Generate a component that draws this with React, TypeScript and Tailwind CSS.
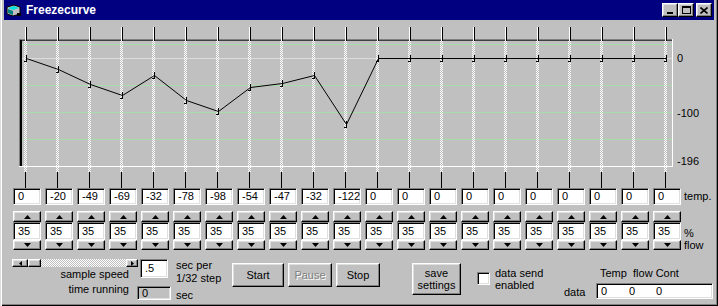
import type { ReactNode } from 'react'

const temps = [0, -20, -49, -69, -32, -78, -98, -54, -47, -32, -122, 0, 0, 0, 0, 0, 0, 0, 0, 0, 0]

const raised =
  'border border-t-white border-l-white border-r-black border-b-black shadow-[inset_-1px_-1px_0_#808080,inset_1px_1px_0_#dfdfdf] bg-[#c0c0c0]'
const sunken =
  'border border-t-[#808080] border-l-[#808080] border-r-white border-b-white shadow-[inset_1px_1px_0_#000,inset_-1px_-1px_0_#dfdfdf]'

const colX = (k: number) => 25 + 32 * k
const valY = (v: number) => 58 - v * 0.54

function Chart() {
  const pts = temps.map((v, k) => `${colX(k) + 1.5},${Math.round(valY(v)) + 0.5}`).join(' ')
  return (
    <svg width="672" height="168" viewBox="4 20 672 168" className="block shrink-0">
      <g shapeRendering="crispEdges">
        {/* sunken frame */}
        <rect x="19" y="39" width="654" height="1" fill="#808080" />
        <rect x="19" y="40" width="653" height="1" fill="#404040" />
        <rect x="19" y="39" width="1" height="128" fill="#808080" />
        <rect x="20" y="40" width="2" height="126" fill="#000" />
        <rect x="672" y="39" width="1" height="128" fill="#fff" />
        <rect x="19" y="166" width="654" height="1" fill="#fff" />
        {/* grid */}
        {[44, 85, 112, 139].map(y => (
          <rect key={y} x="22" y={y} width="650" height="1" fill="#a8dca8" />
        ))}
        <rect x="22" y="58" width="650" height="1" fill="#dcdcdc" />
        {temps.map((_, k) => (
          <g key={k}>
            <line x1={colX(k) - 0.5} y1="41" x2={colX(k) - 0.5} y2="172" stroke="#fff" strokeDasharray="1 1" />
            <line x1={colX(k) + 0.5} y1="42" x2={colX(k) + 0.5} y2="172" stroke="#fff" strokeDasharray="1 1" />
            <line x1={colX(k) + 1.5} y1="41" x2={colX(k) + 1.5} y2="172" stroke="#fff" strokeDasharray="1 1" />
            <rect x={colX(k)} y="27" width="1" height="14" fill="#fff" />
            <rect x={colX(k) + 1} y="27" width="1" height="14" fill="#000" />
            <rect x={colX(k)} y="172" width="1" height="16" fill="#000" />
          </g>
        ))}
      </g>
      {/* curve */}
      <polyline points={pts} fill="none" stroke="#000" strokeWidth="1" />
      <g shapeRendering="crispEdges">
        {temps.map((v, k) => {
          const x = colX(k) + 1.5
          const y = Math.round(valY(v)) + 0.5
          return <path key={k} d={`M${x - 3} ${y + 3} H${x} V${y - 4}`} fill="none" stroke="#000" strokeWidth="1" />
        })}
      </g>
    </svg>
  )
}

function Arrow({ dir }: { dir: 'up' | 'down' | 'left' | 'right' }) {
  if (dir === 'up') return <svg width="7" height="4"><polygon points="3.5,0 7,4 0,4" fill="#000" /></svg>
  if (dir === 'down') return <svg width="7" height="4"><polygon points="0,0 7,0 3.5,4" fill="#000" /></svg>
  if (dir === 'left') return <svg width="3" height="5"><polygon points="3,0 3,5 0,2.5" fill="#000" /></svg>
  return <svg width="3" height="5"><polygon points="0,0 3,2.5 0,5" fill="#000" /></svg>
}

function TitleButton({ children, className = '' }: { children: ReactNode; className?: string }) {
  return <div className={`flex h-[14px] w-[16px] items-center justify-center ${raised} ${className}`}>{children}</div>
}

function Button({ children, className = '' }: { children?: ReactNode; className?: string }) {
  return <div className={`flex items-center justify-center text-center ${raised} ${className}`}>{children}</div>
}

export default function App() {
  return (
    <div className="h-[306px] w-[718px] overflow-hidden bg-[#c0c0c0] px-[4px] pb-[4px] font-['Liberation_Sans',Arial,sans-serif] text-[11px] leading-[13px] text-black shadow-[inset_1px_0_0_#dfdfdf,inset_2px_0_0_#fff,inset_-1px_-1px_0_#000,inset_-2px_-2px_0_#808080]">
      {/* title bar */}
      <div className="flex h-[20px] items-center bg-[#000080] pl-[2px] pr-[2px]">
        <svg width="16" height="14" viewBox="0 0 16 14" className="mr-[4px]">
          <path d="M1 4 L8 2 L14 4 L14 11 L7 13 L1 11 Z" fill="#c0c0c0" stroke="#000" />
          <path d="M2 5 L8 3 L13 5 L7 7 Z" fill="#00e0e0" />
          <path d="M2 6 L7 8 L7 12 L2 10 Z" fill="#008080" />
          <rect x="11" y="10" width="4" height="3" fill="#000" />
        </svg>
        <span className="text-[12px] font-bold text-white">Freezecurve</span>
        <div className="ml-auto flex items-center">
          <TitleButton>
            <div className="mt-[6px] h-[2px] w-[6px] bg-black" />
          </TitleButton>
          <TitleButton>
            <div className="h-[8px] w-[9px] border border-t-2 border-black" />
          </TitleButton>
          <TitleButton className="ml-[2px]">
            <svg width="8" height="7" viewBox="0 0 8 7">
              <path d="M0.5 0.5 L7.5 6.5 M7.5 0.5 L0.5 6.5" stroke="#000" strokeWidth="1.6" />
            </svg>
          </TitleButton>
        </div>
      </div>

      {/* chart + scale */}
      <div className="flex h-[168px]">
        <Chart />
        <div className="flex w-[38px] flex-col pl-[1px]">
          <span className="mt-[32px]">0</span>
          <span className="mt-[42px]">-100</span>
          <span className="mt-[35px]">-196</span>
        </div>
      </div>

      {/* temperatures */}
      <div className="flex h-[17px] items-center gap-[4px] pl-[9px]">
        {temps.map((t, i) => (
          <div key={i} className={`flex h-[17px] w-[28px] items-center overflow-hidden bg-white pl-[4px] ${sunken}`}>
            {t}
          </div>
        ))}
        <span className="ml-[-1px]">temp.</span>
      </div>

      {/* flow spinners */}
      <div className="mt-[6px] flex h-[39px] items-start gap-[4px] pl-[9px]">
        {temps.map((_, i) => (
          <div key={i} className="flex w-[28px] flex-col">
            <Button className="h-[11px]"><Arrow dir="up" /></Button>
            <div className={`flex h-[18px] items-center bg-white pl-[4px] ${sunken}`}>35</div>
            <Button className="h-[10px]"><Arrow dir="down" /></Button>
          </div>
        ))}
        <div className="ml-[-1px] flex flex-col pt-[16px] leading-[12px]">
          <span>%</span>
          <span>flow</span>
        </div>
      </div>

      {/* controls */}
      <div className="flex">
        <div className="flex w-[228px] flex-col pt-[9px]">
          <div className="flex h-[27px] items-start">
            <div className="flex w-[134px] flex-col pl-[8px]">
              <div className="flex h-[8px] w-[126px]">
                <Button className="w-[16px]"><Arrow dir="left" /></Button>
                <Button className="w-[13px]" />
                <div className="flex-1 bg-[repeating-conic-gradient(#fff_0%_25%,#c0c0c0_0%_50%)] [background-size:2px_2px]" />
                <Button className="w-[12px]"><Arrow dir="right" /></Button>
              </div>
              <span className="mt-[1px] pr-[9px] text-right">sample speed</span>
            </div>
            <div className={`ml-[2px] flex h-[19px] w-[28px] items-center bg-white pl-[4px] ${sunken}`}>.5</div>
            <div className="ml-[8px] flex flex-col">
              <span>sec per</span>
              <span>1/32 step</span>
            </div>
          </div>
          <div className="flex h-[14px] items-start">
            <span className="-mt-[3px] w-[125px] text-right">time running</span>
            <div className={`ml-[8px] flex h-[14px] w-[34px] items-center bg-[#c0c0c0] pl-[4px] ${sunken}`}>0</div>
            <span className="ml-[5px] mt-[3px]">sec</span>
          </div>
        </div>

        <div className="flex items-start pt-[13px]">
          <Button className="h-[24px] w-[52px]">Start</Button>
          <Button className="ml-[4px] h-[24px] w-[44px] text-[#808080] [text-shadow:1px_1px_0_#fff]">Pause</Button>
          <Button className="ml-[4px] h-[24px] w-[44px]">Stop</Button>
          <Button className="ml-[32px] h-[32px] w-[49px] leading-[12px]">save<br />settings</Button>
        </div>

        <div className="ml-[16px] flex w-[87px] items-start">
          <div className={`mt-[22px] h-[13px] w-[13px] bg-white ${sunken}`} />
          <div className="ml-[5px] mt-[17px] flex flex-col leading-[12px]">
            <span>data send</span>
            <span>enabled</span>
          </div>
        </div>

        <div className="flex w-[150px] flex-col">
          <span className="mt-[17px] whitespace-pre pl-[36px] leading-[12px]">Temp  flow Cont</span>
          <div className="mt-[4px] flex items-center">
            <span className="mt-[2px] w-[32px]">data</span>
            <div className={`flex h-[16px] w-[117px] items-center bg-white pl-[4px] ${sunken}`}>
              <span className="w-[28px]">0</span>
              <span className="w-[27px]">0</span>
              <span>0</span>
            </div>
          </div>
        </div>
      </div>
    </div>
  )
}
